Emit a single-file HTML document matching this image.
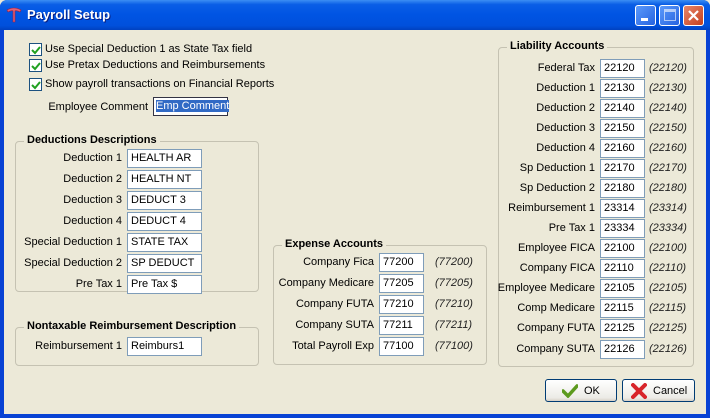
<!DOCTYPE html>
<html><head><style>
*{margin:0;padding:0;box-sizing:border-box}
body{width:710px;height:418px;overflow:hidden;font-family:"Liberation Sans",sans-serif;font-size:11px;color:#000;background:#ECE9D8}
.win{position:absolute;left:0;top:0;width:710px;height:418px;background:#0842D4;border-radius:7px 7px 0 0}
.title{position:absolute;left:0;top:0;width:710px;height:30px;border-radius:7px 7px 0 0;background:linear-gradient(#3C8EF3 0%,#0A5EE6 15%,#0054E3 50%,#0050DC 85%,#0041C0 100%)}
.title span{position:absolute;left:27px;top:7px;color:#fff;font-weight:bold;font-size:13px;text-shadow:1px 1px #0A1E80}
.body{position:absolute;left:4px;top:30px;width:702px;height:384px;background:#ECE9D8}
.a{position:absolute;white-space:nowrap}
.r{position:absolute;text-align:right;white-space:nowrap}
.in{position:absolute;height:19px;border:1px solid #7F9DB9;background:#fff;padding:2px 0 0 3px;white-space:nowrap}
.it{position:absolute;font-style:italic;color:#222}
.g{position:absolute;border:1px solid #C5C2B2;border-radius:4px}
.gt{position:absolute;top:-8px;left:8px;background:#ECE9D8;padding:0 3px;font-weight:bold;font-size:11px;color:#000}
.cb{position:absolute;width:13px;height:13px;border:1px solid #1C5180;background:#fff}
.cb svg{position:absolute;left:1px;top:1px}
.btn{position:absolute;height:23px;border:1px solid #003C74;border-radius:3px;background:linear-gradient(#fff,#ECEBE6 85%,#D6D0C5)}
.wb{position:absolute;top:5px;width:21px;height:21px;border:1px solid #fff;border-radius:3px}
</style></head><body>
<div class="win">
<div class="title">
<svg style="position:absolute;left:6px;top:7px" width="16" height="17"><path d="M1 3 Q8 -1 15 3 L14 5 Q10 3 9 4 L9 15 L7 15 L7 4 Q6 3 2 5 Z" fill="#E0607A" stroke="#9a2040" stroke-width=".6"/></svg>
<span>Payroll Setup</span>
<div class="wb" style="left:635px;background:linear-gradient(135deg,#5B9AFB,#2663E0)"><div style="position:absolute;left:5px;top:12px;width:7px;height:3px;background:#fff"></div></div>
<div class="wb" style="left:659px;background:linear-gradient(135deg,#5B9AFB,#2663E0)"><div style="position:absolute;left:4px;top:3px;width:12px;height:12px;border:1px solid #fff;border-top-width:3px;opacity:.6"></div></div>
<div class="wb" style="left:683px;background:linear-gradient(135deg,#E8866A,#C4401E)"><svg width="19" height="19"><path d="M5 5 L14 14 M14 5 L5 14" stroke="#fff" stroke-width="2.2"/></svg></div>
</div>
<div class="body"></div>
</div>

<div class="cb" style="left:29px;top:43px"><svg width="10" height="10"><path d="M1 5 L4 8 L9 2" stroke="#21A121" stroke-width="2" fill="none"/></svg></div>
<div class="a" style="left:45px;top:43px">Use Special Deduction 1 as State Tax field</div>
<div class="cb" style="left:29px;top:59px"><svg width="10" height="10"><path d="M1 5 L4 8 L9 2" stroke="#21A121" stroke-width="2" fill="none"/></svg></div>
<div class="a" style="left:45px;top:59px">Use Pretax Deductions and Reimbursements</div>
<div class="cb" style="left:29px;top:78px"><svg width="10" height="10"><path d="M1 5 L4 8 L9 2" stroke="#21A121" stroke-width="2" fill="none"/></svg></div>
<div class="a" style="left:45px;top:78px">Show payroll transactions on Financial Reports</div>
<div class="r" style="left:40px;width:108px;top:101px">Employee Comment</div>
<div class="in" style="left:153px;top:97px;width:75px;border-color:#334">
<span style="background:#316AC5;color:#fff;margin-left:-1px">Emp Comment</span></div>

<div class="g" style="left:15px;top:141px;width:244px;height:151px"><div class="gt">Deductions Descriptions</div></div>
<div class="g" style="left:15px;top:327px;width:244px;height:39px"><div class="gt">Nontaxable Reimbursement Description</div></div>
<div class="g" style="left:273px;top:245px;width:214px;height:120px"><div class="gt">Expense Accounts</div></div>
<div class="g" style="left:498px;top:47px;width:196px;height:320px"><div class="gt">Liability Accounts</div></div>

<div class="r" style="left:0;width:122px;top:152px">Deduction 1</div><div class="in" style="left:127px;top:149px;width:75px">HEALTH AR</div>
<div class="r" style="left:0;width:122px;top:173px">Deduction 2</div><div class="in" style="left:127px;top:170px;width:75px">HEALTH NT</div>
<div class="r" style="left:0;width:122px;top:194px">Deduction 3</div><div class="in" style="left:127px;top:191px;width:75px">DEDUCT 3</div>
<div class="r" style="left:0;width:122px;top:215px">Deduction 4</div><div class="in" style="left:127px;top:212px;width:75px">DEDUCT 4</div>
<div class="r" style="left:0;width:122px;top:236px">Special Deduction 1</div><div class="in" style="left:127px;top:233px;width:75px">STATE TAX</div>
<div class="r" style="left:0;width:122px;top:257px">Special Deduction 2</div><div class="in" style="left:127px;top:254px;width:75px">SP DEDUCT</div>
<div class="r" style="left:0;width:122px;top:278px">Pre Tax 1</div><div class="in" style="left:127px;top:275px;width:75px">Pre Tax $</div>
<div class="r" style="left:0;width:122px;top:340px">Reimbursement 1</div><div class="in" style="left:127px;top:337px;width:75px">Reimburs1</div>

<div class="r" style="left:270px;width:104px;top:256px">Company Fica</div><div class="in" style="left:379px;top:253px;width:45px">77200</div><div class="it" style="left:435px;top:256px">(77200)</div>
<div class="r" style="left:270px;width:104px;top:277px">Company Medicare</div><div class="in" style="left:379px;top:274px;width:45px">77205</div><div class="it" style="left:435px;top:277px">(77205)</div>
<div class="r" style="left:270px;width:104px;top:298px">Company FUTA</div><div class="in" style="left:379px;top:295px;width:45px">77210</div><div class="it" style="left:435px;top:298px">(77210)</div>
<div class="r" style="left:270px;width:104px;top:319px">Company SUTA</div><div class="in" style="left:379px;top:316px;width:45px">77211</div><div class="it" style="left:435px;top:319px">(77211)</div>
<div class="r" style="left:270px;width:104px;top:340px">Total Payroll Exp</div><div class="in" style="left:379px;top:337px;width:45px">77100</div><div class="it" style="left:435px;top:340px">(77100)</div>

<div class="r" style="left:490px;width:105px;top:62px">Federal Tax</div><div class="in" style="left:600px;top:59px;width:45px">22120</div><div class="it" style="left:649px;top:62px">(22120)</div>
<div class="r" style="left:490px;width:105px;top:82px">Deduction 1</div><div class="in" style="left:600px;top:79px;width:45px">22130</div><div class="it" style="left:649px;top:82px">(22130)</div>
<div class="r" style="left:490px;width:105px;top:102px">Deduction 2</div><div class="in" style="left:600px;top:99px;width:45px">22140</div><div class="it" style="left:649px;top:102px">(22140)</div>
<div class="r" style="left:490px;width:105px;top:122px">Deduction 3</div><div class="in" style="left:600px;top:119px;width:45px">22150</div><div class="it" style="left:649px;top:122px">(22150)</div>
<div class="r" style="left:490px;width:105px;top:142px">Deduction 4</div><div class="in" style="left:600px;top:139px;width:45px">22160</div><div class="it" style="left:649px;top:142px">(22160)</div>
<div class="r" style="left:490px;width:105px;top:162px">Sp Deduction 1</div><div class="in" style="left:600px;top:159px;width:45px">22170</div><div class="it" style="left:649px;top:162px">(22170)</div>
<div class="r" style="left:490px;width:105px;top:182px">Sp Deduction 2</div><div class="in" style="left:600px;top:179px;width:45px">22180</div><div class="it" style="left:649px;top:182px">(22180)</div>
<div class="r" style="left:490px;width:105px;top:202px">Reimbursement 1</div><div class="in" style="left:600px;top:199px;width:45px">23314</div><div class="it" style="left:649px;top:202px">(23314)</div>
<div class="r" style="left:490px;width:105px;top:222px">Pre Tax 1</div><div class="in" style="left:600px;top:219px;width:45px">23334</div><div class="it" style="left:649px;top:222px">(23334)</div>
<div class="r" style="left:490px;width:105px;top:242px">Employee FICA</div><div class="in" style="left:600px;top:239px;width:45px">22100</div><div class="it" style="left:649px;top:242px">(22100)</div>
<div class="r" style="left:490px;width:105px;top:262px">Company FICA</div><div class="in" style="left:600px;top:259px;width:45px">22110</div><div class="it" style="left:649px;top:262px">(22110)</div>
<div class="r" style="left:490px;width:105px;top:282px">Employee Medicare</div><div class="in" style="left:600px;top:279px;width:45px">22105</div><div class="it" style="left:649px;top:282px">(22105)</div>
<div class="r" style="left:490px;width:105px;top:302px">Comp Medicare</div><div class="in" style="left:600px;top:299px;width:45px">22115</div><div class="it" style="left:649px;top:302px">(22115)</div>
<div class="r" style="left:490px;width:105px;top:322px">Company FUTA</div><div class="in" style="left:600px;top:319px;width:45px">22125</div><div class="it" style="left:649px;top:322px">(22125)</div>
<div class="r" style="left:490px;width:105px;top:343px">Company SUTA</div><div class="in" style="left:600px;top:340px;width:45px">22126</div><div class="it" style="left:649px;top:343px">(22126)</div>

<div class="btn" style="left:545px;top:379px;width:72px">
<svg style="position:absolute;left:16px;top:4px" width="16" height="14"><path d="M1 7 L6 12 L15 2" stroke="#5C9A1E" stroke-width="3.5" fill="none" stroke-linecap="round"/></svg>
<div class="a" style="left:38px;top:5px">OK</div></div>
<div class="btn" style="left:622px;top:379px;width:73px">
<svg style="position:absolute;left:8px;top:3px" width="16" height="16"><path d="M2 2 L14 14 M14 2 L2 14" stroke="#D8252A" stroke-width="4" stroke-linecap="round"/></svg>
<div class="a" style="left:30px;top:5px">Cancel</div></div>
</body></html>
